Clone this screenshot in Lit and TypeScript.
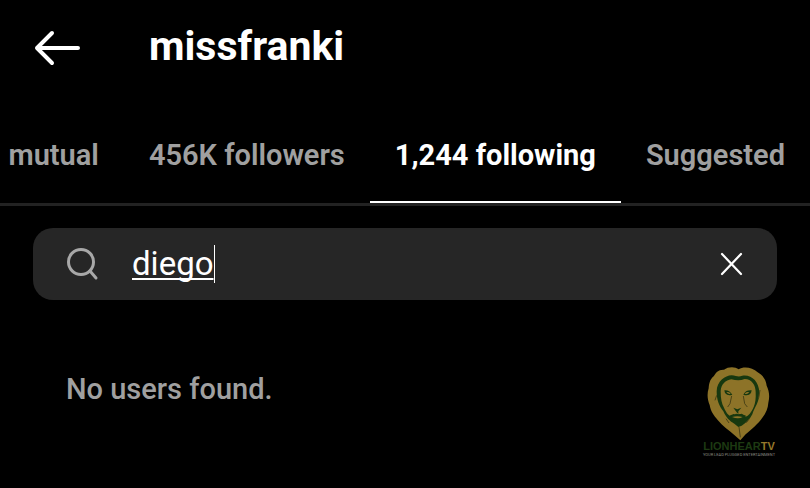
import { LitElement, html, css } from "lit";
import { customElement, state } from "lit/decorators.js";
import { classMap } from "lit/directives/class-map.js";

@customElement("lion-mark")
class LionMark extends LitElement {
  static styles = css`
    :host { display: flex; flex-direction: column; align-items: center; width: 74px; }
    svg { display: block; width: 64px; height: 76px; }
    .name { font: 700 11px/11px "Liberation Sans", sans-serif; color: #1d3a12; white-space: nowrap; }
    .tv { color: #95782a; }
    .tagline { margin-top: 1px; font: 400 4px/4px Roboto, sans-serif; color: #8a8a80; white-space: nowrap; }
  `;
  render() {
    return html`
      <svg viewBox="50 29 192 228" aria-hidden="true">
        <path fill="#8d7328" d="M145 42C134 33 113 34 101 43C84 42 76 52 70 63C58 73 56 86 55 99C49 118 52 135 58 149C61 168 71 181 82 194C97 213 115 224 131 238L150 255L166 237C183 222 204 205 216 187C227 173 233 158 234 142C239 123 236 105 229 91C227 72 217 60 202 51C187 37 161 32 145 42Z"/>
        <path fill="#17380f" d="M79 108C80 77 104 61 124 60C139 62 145 66 156 61C184 57 205 78 207 110C208 141 193 154 186 177C178 193 166 204 154 211L144 215L132 205C117 197 107 186 99 168C87 152 79 135 79 108Z"/>
        <path fill="#8d7328" d="M91 108C92 86 106 75 123 72C139 76 151 76 163 71C184 71 196 89 196 110C197 128 195 145 190 155C183 172 174 182 166 184L154 175L146 177L137 175L124 184C112 180 106 168 101 157C94 146 91 130 91 108Z"/>
        <path fill="#17380f" d="M102 105Q116 103 126 118Q113 124 104 113ZM184 105Q166 103 159 118Q174 124 182 113ZM129 157L141 162L153 157L144 168V176L139 171ZM117 181L130 176L140 179L153 176L167 181L158 193L146 198L126 194Z"/>
        <path fill="#8d7328" d="M108 111Q116 107 121 115Q116 119 108 111ZM163 115Q168 107 177 111Q171 119 163 115ZM125 185Q141 181 157 185Q144 193 125 185Z"/>
        <path fill="none" stroke="#4a4216" stroke-width="3" d="M124 122L119 145L112 155M159 122L163 145L171 155M79 120L74 135M209 104L205 128M107 190L116 203M177 190L168 202M146 215L150 246"/>
      </svg>
      <div class="name">LIONHEAR<span class="tv">TV</span></div>
      <div class="tagline">YOUR LEAD PLUGGED ENTERTAINMENT</div>
    `;
  }
}

@customElement("app-root")
class AppRoot extends LitElement {
  @state() private tabs = ["mutual", "456K followers", "1,244 following", "Suggested"];
  @state() private selected = 2;
  @state() private query = "diego";

  static styles = css`
    :host {
      display: block;
      min-height: 100vh;
      background: #000;
      color: #fff;
      font-family: Roboto, sans-serif;
    }
    * { box-sizing: border-box; }
    button { padding: 0; border: 0; background: none; color: inherit; font: inherit; cursor: pointer; }
    svg { display: block; }
    .bar { display: flex; align-items: center; gap: 67px; height: 96px; padding: 0 34px; }
    h1 { margin: 0; font-size: 41px; line-height: 92px; font-weight: 700; align-self: flex-start; }
    .tabs {
      display: flex;
      justify-content: flex-end;
      height: 110px;
      overflow: hidden;
      border-bottom: 3px solid #222;
    }
    .tab {
      flex: none;
      padding: 12px 25px 0;
      font-size: 29px;
      font-weight: 600;
      color: #a0a0a0;
      border-bottom: 2px solid transparent;
    }
    .tab.on { color: #fff; font-weight: 700; border-color: #fff; }
    .search {
      display: flex;
      align-items: center;
      height: 72px;
      margin: 22px 33px 0;
      padding: 0 33px;
      border-radius: 20px;
      background: #262626;
    }
    .search label { margin-right: 33px; }
    .search input {
      field-sizing: content;
      padding: 0;
      border: 0;
      outline: 0;
      background: none;
      color: #fff;
      font: 400 33px/40px Roboto, sans-serif;
      text-decoration: underline 2px;
      text-decoration-skip-ink: none;
      text-underline-offset: 3px;
    }
    .caret { width: 1px; height: 38px; background: #fff; }
    .clear { margin-left: auto; }
    .results { display: flex; justify-content: space-between; padding: 65px 34px 0 66px; }
    .results p { margin: 0; padding-top: 6px; font-size: 29px; line-height: 36px; font-weight: 500; color: #a0a0a0; }
  `;

  render() {
    return html`
      <header class="bar">
        <button aria-label="Back">
          <svg width="48" height="36" viewBox="0 0 48 36" fill="none" stroke="#fff" stroke-width="4" stroke-linecap="round" stroke-linejoin="round">
            <path d="M18 3L3 18L18 33M3 18H44" />
          </svg>
        </button>
        <h1>missfranki</h1>
      </header>
      <nav class="tabs">
        ${this.tabs.map((t, i) => html`
          <button class=${classMap({ tab: true, on: i === this.selected })} @click=${() => (this.selected = i)}>${t}</button>`)}
      </nav>
      <div class="search">
        <label for="q" aria-label="Search">
          <svg width="33" height="34" viewBox="0 0 33 34" fill="none" stroke="#a8a8a8" stroke-width="3" stroke-linecap="round">
            <circle cx="15" cy="15" r="12.5" /><path d="M24 24L30 31" />
          </svg>
        </label>
        <input id="q" type="text" autocomplete="off" spellcheck="false" .value=${this.query}
          @input=${(e: Event) => (this.query = (e.target as HTMLInputElement).value)} />
        <span class="caret"></span>
        <button class="clear" aria-label="Clear" @click=${() => (this.query = "")}>
          <svg width="24" height="24" viewBox="0 0 24 24" fill="none" stroke="#fff" stroke-width="2.2" stroke-linecap="round">
            <path d="M2 2L21 22M21 2L2 22" />
          </svg>
        </button>
      </div>
      <main class="results">
        <p>No users found.</p>
        <lion-mark></lion-mark>
      </main>
    `;
  }
}
